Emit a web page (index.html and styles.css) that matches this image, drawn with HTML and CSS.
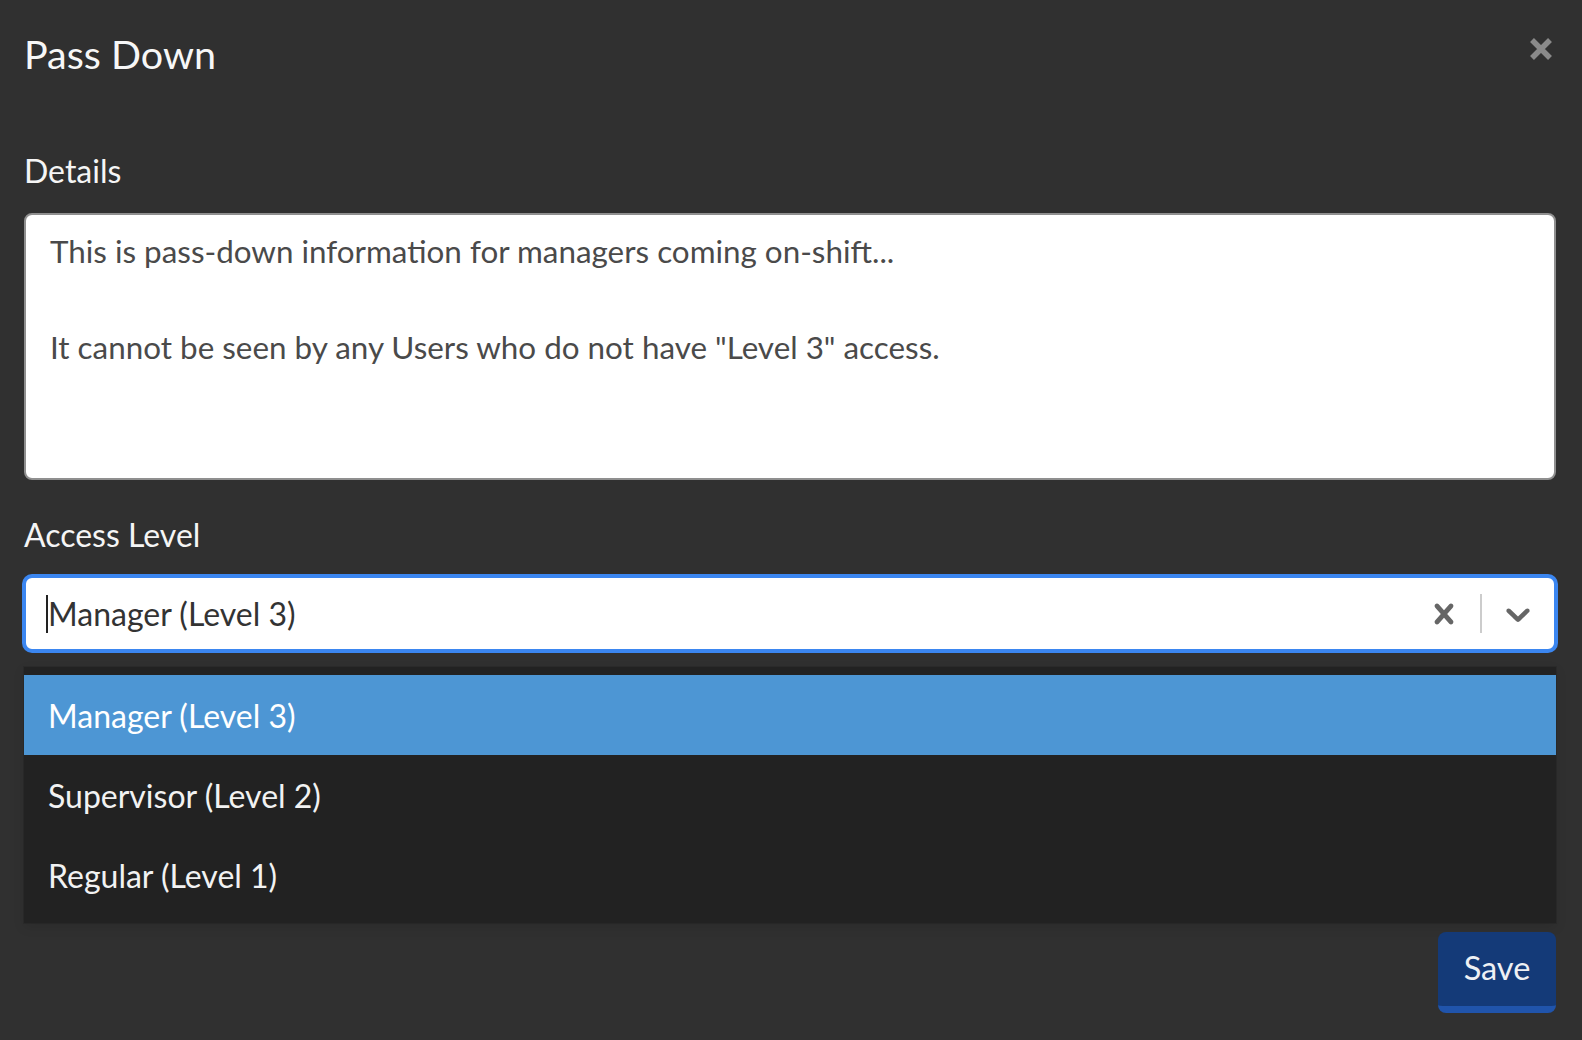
FILE: index.html
```html
<!DOCTYPE html>
<html lang="en">
<head>
    <meta charset="UTF-8">
    <meta name="viewport" content="width=device-width, initial-scale=1.0">
    <title>Pass Down</title>
    <link rel="stylesheet" href="styles.css">
</head>
<body>

    <div class="modal">
        <header class="modal-head">
            <h1 class="modal-title">Pass Down</h1>
            <button type="button" class="close-btn" aria-label="Close">
                <svg width="24" height="24" viewBox="0 0 24 24">
                    <path d="M3 3 L21 21 M21 3 L3 21" stroke="#8a8a8a" stroke-width="5.5" fill="none"/>
                </svg>
            </button>
        </header>

        <form class="modal-body">
            <label class="field-label" for="details">Details</label>
            <div class="details-box" id="details">
                <p>This is pass-down information for managers coming on-shift...</p>
                <p>&nbsp;</p>
                <p>It cannot be seen by any Users who do not have "Level 3" access.</p>
            </div>

            <label class="field-label access-label">Access Level</label>
            <div class="select">
                <div class="select-control">
                    <div class="select-value"><span class="caret"></span>Manager (Level 3)</div>
                    <div class="select-indicators">
                        <span class="indicator">
                            <svg width="40" height="40" viewBox="0 0 20 20">
                                <path fill="#666" d="M14.348 14.849c-0.469 0.469-1.229 0.469-1.697 0l-2.651-3.030-2.651 3.029c-0.469 0.469-1.229 0.469-1.697 0-0.469-0.469-0.469-1.229 0-1.697l2.758-3.15-2.759-3.152c-0.469-0.469-0.469-1.228 0-1.697s1.228-0.469 1.697 0l2.652 3.031 2.651-3.031c0.469-0.469 1.228-0.469 1.697 0s0.469 1.229 0 1.697l-2.758 3.152 2.758 3.15c0.469 0.469 0.469 1.229 0 1.698z"/>
                            </svg>
                        </span>
                        <span class="separator"></span>
                        <span class="indicator">
                            <svg width="40" height="40" viewBox="0 0 20 20">
                                <path fill="#666" d="M4.516 7.548c0.436-0.446 1.043-0.481 1.576 0l3.908 3.747 3.908-3.747c0.533-0.481 1.141-0.446 1.574 0 0.436 0.445 0.408 1.197 0 1.615-0.406 0.418-4.695 4.502-4.695 4.502-0.217 0.223-0.502 0.335-0.787 0.335s-0.57-0.112-0.789-0.335c0 0-4.287-4.084-4.695-4.502s-0.436-1.17 0-1.615z"/>
                            </svg>
                        </span>
                    </div>
                </div>
                <ul class="select-menu">
                    <li class="option selected">Manager (Level 3)</li>
                    <li class="option">Supervisor (Level 2)</li>
                    <li class="option">Regular (Level 1)</li>
                </ul>
            </div>

            <div class="modal-foot">
                <button type="button" class="save-btn">Save</button>
            </div>
        </form>
    </div>

</body>
</html>
```

FILE: styles.css
```css
body {
    margin: 0;
    background-color: #303030;
    font-family: Lato, "Open Sans", sans-serif;
    color: #f5f5f5;
}
.modal {
    padding: 30px 26px 0 24px;
}
.modal-head {
    display: flex;
    justify-content: space-between;
    align-items: flex-start;
}
.modal-title {
    margin: 0;
    font-size: 39.5px;
    font-weight: 400;
    line-height: 48px;
    color: #f7f7f7;
}
.close-btn {
    margin: 7px 3px 0 0;
    padding: 0;
    border: none;
    background: none;
    line-height: 0;
    cursor: pointer;
}
.modal-body {
    display: flex;
    flex-direction: column;
    margin-top: 69px;
}
.field-label {
    font-size: 32px;
    line-height: 48px;
    color: #f5f5f5;
}
.access-label {
    margin-top: 31px;
}
.details-box {
    margin-top: 18px;
    height: 239px;
    padding: 12px 24px;
    background-color: #fff;
    border: 2px solid #8f8f8f;
    border-radius: 8px;
    color: #4a4a4a;
    font-size: 31.4px;
    line-height: 48px;
}
.details-box p {
    margin: 0;
}
.select {
    margin-top: 17px;
}
.select-control {
    display: flex;
    align-items: center;
    height: 71px;
    background-color: #fff;
    border: 2px solid #3b86f0;
    box-shadow: 0 0 0 2px #3b86f0;
    border-radius: 8px;
}
.select-value {
    flex: 1;
    display: flex;
    align-items: center;
    padding-left: 20px;
    color: #333;
    font-size: 32px;
}
.caret {
    display: inline-block;
    width: 2px;
    height: 38px;
    background-color: #222;
}
.select-indicators {
    display: flex;
    align-items: center;
    align-self: stretch;
}
.indicator {
    display: flex;
    padding: 16px;
}
.separator {
    align-self: stretch;
    width: 2px;
    margin: 16px 0;
    background-color: #ccc;
}
.select-menu {
    list-style: none;
    margin: 16px 0 0;
    padding: 8px 0;
    background-color: #222;
    box-shadow: 0 0 0 1px rgba(0, 0, 0, 0.1), 0 4px 11px rgba(0, 0, 0, 0.1);
}
.option {
    height: 80px;
    display: flex;
    align-items: center;
    padding: 0 24px;
    font-size: 32px;
    color: #f2f2f2;
}
.option.selected {
    background-color: #4d96d4;
    color: #fff;
}
.modal-foot {
    display: flex;
    justify-content: flex-end;
    margin-top: 9px;
}
.save-btn {
    width: 118px;
    height: 81px;
    padding: 0 0 4px;
    background-color: #143a78;
    border: none;
    border-bottom: 7px solid #2054ab;
    border-radius: 8px;
    color: #eef0f4;
    font-family: Lato, sans-serif;
    font-size: 32.5px;
    cursor: pointer;
}
```
